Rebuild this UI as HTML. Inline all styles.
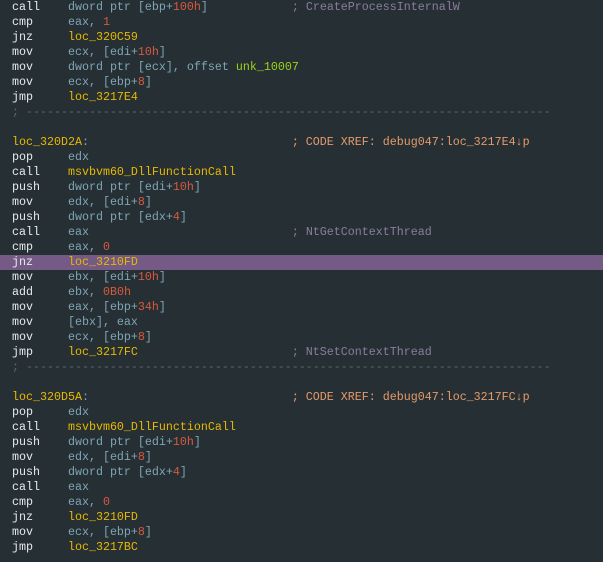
<!DOCTYPE html>
<html><head><style>
html,body{margin:0;padding:0;background:#263034;width:603px;height:562px;overflow:hidden}
pre{margin:0;padding:0 0 0 12px;font-family:"Liberation Mono",monospace;font-size:11.67px;line-height:15px;color:#e6eaec}
.r{display:block;height:15px;white-space:pre}
.o{color:#7fa5b5}.n{color:#d9583f}.l{color:#e8b800}.g{color:#9ad31a}.c{color:#8b7c9e}.x{color:#e69a6a}.s{color:#5b6870}
.h{background:#745a84;margin-left:-12px;padding-left:12px}
</style></head><body><pre><span class="r">call    <span class="o">dword ptr [ebp+<span class="n">100h</span>]</span>            <span class="c">; CreateProcessInternalW</span></span><span class="r">cmp     <span class="o">eax, <span class="n">1</span></span></span><span class="r">jnz     <span class="l">loc_320C59</span></span><span class="r">mov     <span class="o">ecx, [edi+<span class="n">10h</span>]</span></span><span class="r">mov     <span class="o">dword ptr [ecx], offset </span><span class="g">unk_10007</span></span><span class="r">mov     <span class="o">ecx, [ebp+<span class="n">8</span>]</span></span><span class="r">jmp     <span class="l">loc_3217E4</span></span><span class="r s">; ---------------------------------------------------------------------------</span><span class="r"> </span><span class="r"><span class="l">loc_320D2A</span><span class="o">:</span>                             <span class="x">; CODE XREF: debug047:loc_3217E4↓p</span></span><span class="r">pop     <span class="o">edx</span></span><span class="r">call    <span class="l">msvbvm60_DllFunctionCall</span></span><span class="r">push    <span class="o">dword ptr [edi+<span class="n">10h</span>]</span></span><span class="r">mov     <span class="o">edx, [edi+<span class="n">8</span>]</span></span><span class="r">push    <span class="o">dword ptr [edx+<span class="n">4</span>]</span></span><span class="r">call    <span class="o">eax</span>                             <span class="c">; NtGetContextThread</span></span><span class="r">cmp     <span class="o">eax, <span class="n">0</span></span></span><span class="r h">jnz     <span class="l">loc_3210FD</span>                                                                          </span><span class="r">mov     <span class="o">ebx, [edi+<span class="n">10h</span>]</span></span><span class="r">add     <span class="o">ebx, <span class="n">0B0h</span></span></span><span class="r">mov     <span class="o">eax, [ebp+<span class="n">34h</span>]</span></span><span class="r">mov     <span class="o">[ebx], eax</span></span><span class="r">mov     <span class="o">ecx, [ebp+<span class="n">8</span>]</span></span><span class="r">jmp     <span class="l">loc_3217FC</span>                      <span class="c">; NtSetContextThread</span></span><span class="r s">; ---------------------------------------------------------------------------</span><span class="r"> </span><span class="r"><span class="l">loc_320D5A</span><span class="o">:</span>                             <span class="x">; CODE XREF: debug047:loc_3217FC↓p</span></span><span class="r">pop     <span class="o">edx</span></span><span class="r">call    <span class="l">msvbvm60_DllFunctionCall</span></span><span class="r">push    <span class="o">dword ptr [edi+<span class="n">10h</span>]</span></span><span class="r">mov     <span class="o">edx, [edi+<span class="n">8</span>]</span></span><span class="r">push    <span class="o">dword ptr [edx+<span class="n">4</span>]</span></span><span class="r">call    <span class="o">eax</span></span><span class="r">cmp     <span class="o">eax, <span class="n">0</span></span></span><span class="r">jnz     <span class="l">loc_3210FD</span></span><span class="r">mov     <span class="o">ecx, [ebp+<span class="n">8</span>]</span></span><span class="r">jmp     <span class="l">loc_3217BC</span></span></pre></body></html>
